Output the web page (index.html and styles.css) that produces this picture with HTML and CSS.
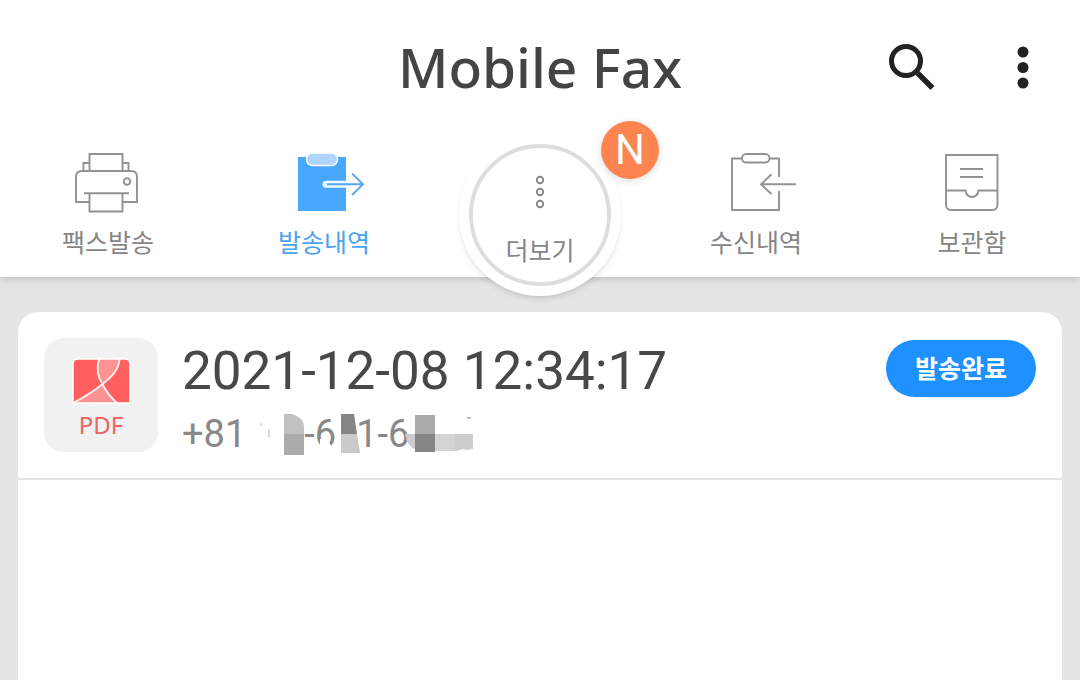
FILE: index.html
```html
<!DOCTYPE html>
<html lang="ko">
<head>
<meta charset="utf-8">
<meta name="viewport" content="width=device-width, initial-scale=1">
<title>Mobile Fax</title>
<link rel="stylesheet" href="styles.css">
</head>
<body>
<header class="header">
  <div class="topbar">
    <h1 class="title">Mobile Fax</h1>
    <div class="actions">
      <button class="icon-button" type="button" aria-label="검색">
        <svg width="48" height="48" viewBox="0 0 48 48" fill="none" stroke="#222"><circle cx="19" cy="18" r="14.500" stroke-width="5"/><path d="M30.500 30L45.500 45" stroke-width="5.500"/></svg>
      </button>
      <button class="icon-button" type="button" aria-label="메뉴">
        <svg width="48" height="48" viewBox="0 0 48 48" fill="#222"><circle cx="24" cy="9" r="5.500"/><circle cx="24" cy="24.500" r="5.500"/><circle cx="24" cy="40" r="5.500"/></svg>
      </button>
    </div>
  </div>
  <nav class="nav">
    <a class="nav-item" href="#send">
      <svg width="68" height="62" viewBox="0 0 68 62" fill="none" stroke="#929292" stroke-width="1.900">
        <path d="M15.500 19V2h33v17M15 11H9.500v8M49 11H54.500v8"/>
        <path d="M15.500 50H2V25q0-6 6-6h49q6 0 6 6v25H49M10 41.300H55M15.500 41.300V59.500h33V41.300"/>
        <circle cx="53" cy="29.500" r="3.300"/>
      </svg>
      <span>팩스발송</span>
    </a>
    <a class="nav-item active" href="#sent" aria-current="page">
      <svg width="84" height="62" viewBox="0 0 84 62" fill="none">
        <path d="M16 5h48v54H16z" fill="#48a7ff"/>
        <rect x="24.500" y="1" width="31" height="12.500" rx="6" fill="#afd5ff" stroke="#fff" stroke-width="1.500"/>
        <path d="M44 32.300H65" stroke="#edf7ff" stroke-width="7" stroke-linecap="round"/>
        <path d="M45 32.300H80M70 21.500L81 32.300L70 43" stroke="#58a9ef" stroke-width="1.900"/>
      </svg>
      <span>발송내역</span>
    </a>
    <a class="nav-item more" href="#more">
      <span class="more-ring">
        <svg width="12" height="36" viewBox="0 0 12 36" fill="none" stroke="#888" stroke-width="1.900"><circle cx="6" cy="6" r="3.200"/><circle cx="6" cy="18" r="3.200"/><circle cx="6" cy="30" r="3.200"/></svg>
        <span>더보기</span>
      </span>
      <span class="badge">N</span>
    </a>
    <a class="nav-item" href="#received">
      <svg width="84" height="62" viewBox="0 0 84 62" fill="none" stroke="#929292" stroke-width="1.900">
        <path d="M28 6.500H18V58H65V39M65 25V6.500H55"/>
        <rect x="28" y="2" width="27.500" height="8.500" rx="4.200"/>
        <path d="M82 32.300H47M57.500 22.300L47 32.300L57.500 42"/>
      </svg>
      <span>수신내역</span>
    </a>
    <a class="nav-item" href="#storage">
      <svg width="56" height="62" viewBox="0 0 56 62" fill="none" stroke="#929292" stroke-width="1.900">
        <path d="M2 3H53.500V52.500q0 5.500-5.500 5.500H7.500Q2 58 2 52.500Z"/>
        <path d="M16 17H39M16 25H39M2 38.500H21.500Q22.500 45 28 45T34.500 38.500H53.500"/>
      </svg>
      <span>보관함</span>
    </a>
  </nav>
</header>
<main class="main">
  <ul class="list">
    <li class="item">
      <div class="file">
        <svg width="60" height="48" viewBox="0 0 60 48" aria-hidden="true">
          <path d="M2 46V7q0-5 5-5H54q5 0 5 5V46Z" fill="#ff605f"/>
          <path d="M28 2Q24 17 31.500 27Q50 15 48.500 2ZM3 45.500Q21 36 31.500 27Q36 37 46 46Z" fill="#ff9292"/>
          <path d="M28 2Q24 17 31.500 27Q36 37 46 46M48.500 2Q48 15 31.500 27Q21 36 3 45.500" fill="none" stroke="#fee" stroke-width="1.900"/>
          <path d="M2 46V7q0-5 5-5H54q5 0 5 5V46Z" fill="none" stroke="#fff" stroke-width="1.500"/>
        </svg>
        <span>PDF</span>
      </div>
      <div class="info">
        <time class="time" datetime="2021-12-08T12:34:17">2021-12-08 12:34:17</time>
        <div class="phone">
          <span>+81</span>
          <svg width="58" height="42" viewBox="0 0 58 42"><path d="M14 10h2v3h-2zM22 16h2v8h-2z" fill="#ddd"/><path d="M38 1h8q12 4 12 12v8H38z" fill="#c1c1c1"/><path d="M38 21h20v21H38z" fill="#ababab"/></svg>
          <span>-6</span>
          <svg class="patch" width="40" height="42" viewBox="0 0 40 42"><path d="M0 26q8-2 11 7h6V42H0z" fill="#fff"/><path d="M21 1h13l3 20H21z" fill="#858585"/><path d="M21 21h16l3 19H21z" fill="#cacaca"/></svg>
          <span>1-6</span>
          <svg class="tail" width="68" height="42" viewBox="0 0 68 42"><path d="M0 21h68v15l-6 1-4-1-6 2H13Q2 34 0 21z" fill="#cdcdcd"/><path d="M30 21h20v17H30z" fill="#d4d4d4"/><path d="M10 2h20v19H10z" fill="#aaa"/><path d="M10 21h20v18H10z" fill="#868686"/><path d="M61 4h5v2h-3z" fill="#bbb"/></svg>
        </div>
      </div>
      <span class="status">발송완료</span>
    </li>
  </ul>
</main>
</body>
</html>
```
FILE: styles.css
```css
* {
  box-sizing: border-box;
}

body {
  display: flex;
  flex-direction: column;
  min-height: 100vh;
  margin: 0;
  background: #e5e5e5;
  font-family: Roboto, "Noto Sans CJK KR", sans-serif;
}

.header {
  position: relative;
  background: #fff;
  box-shadow: 0 2px 8px rgba(0, 0, 0, 0.16);
}

.topbar {
  display: grid;
  grid-template-columns: 1fr auto 1fr;
  align-items: center;
  height: 136px;
  padding: 0 33px 2px;
}

.title {
  grid-column: 2;
  margin: 0;
  color: #444;
  font: 500 55px/80px "Noto Sans", sans-serif;
}

.actions {
  display: flex;
  justify-content: flex-end;
  gap: 64px;
}

.icon-button {
  display: flex;
  padding: 0;
  border: 0;
  background: none;
}

.nav {
  display: grid;
  grid-template-columns: repeat(5, 1fr);
  height: 141px;
}

.nav-item {
  display: flex;
  flex-direction: column;
  align-items: center;
  gap: 12px;
  padding-top: 16px;
  color: #858585;
  font-size: 25px;
  line-height: 36px;
  text-decoration: none;
}

.active {
  color: #48a3f0;
}

.more {
  position: relative;
  padding-top: 0;
}

.more-ring {
  display: flex;
  flex: none;
  flex-direction: column;
  align-items: center;
  gap: 24px;
  width: 142px;
  height: 142px;
  margin-top: 8px;
  padding-top: 26px;
  border: 4px solid #dcdedd;
  border-radius: 50%;
  background: #fff;
  box-shadow: 0 0 0 10px #fff, 0 4px 6px 8px rgba(0, 0, 0, 0.16);
}

.badge {
  position: absolute;
  top: -15px;
  left: calc(50% + 61px);
  width: 58px;
  height: 58px;
  border-radius: 50%;
  background: #ff8550;
  box-shadow: 0 2px 8px rgba(0, 0, 0, 0.12);
  color: #fff;
  font-size: 42px;
  line-height: 58px;
  text-align: center;
}

.main {
  display: flex;
  flex: 1;
  padding: 35px 18px 0;
}

.list {
  flex: 1;
  margin: 0;
  padding: 0;
  border-radius: 20px 20px 0 0;
  background: #fff;
  list-style: none;
}

.item {
  display: flex;
  gap: 24px;
  padding: 26px 26px 14px;
  border-bottom: 2px solid #e5e5e5;
}

.file {
  display: flex;
  flex-direction: column;
  align-items: center;
  gap: 2px;
  width: 114px;
  height: 114px;
  padding-top: 19px;
  border-radius: 20px;
  background: #f1f1f1;
  color: #ed6262;
  font: 24px/36px "Noto Sans", sans-serif;
}

.info {
  flex: 1;
}

.time {
  display: block;
  color: #484848;
  font-size: 53px;
  line-height: 66px;
}

.phone {
  display: flex;
  align-items: center;
  height: 60px;
  color: #888;
  font-size: 38px;
  line-height: 60px;
}

.phone svg {
  flex: none;
}

.phone .patch {
  margin: 0 -4px 0 -16px;
}

.phone .tail {
  margin-left: -4px;
}

.status {
  width: 150px;
  height: 57px;
  margin-top: 2px;
  border-radius: 29px;
  background: #1e90ff;
  color: #fff;
  font-size: 25px;
  font-weight: 700;
  line-height: 60px;
  text-align: center;
}
```
